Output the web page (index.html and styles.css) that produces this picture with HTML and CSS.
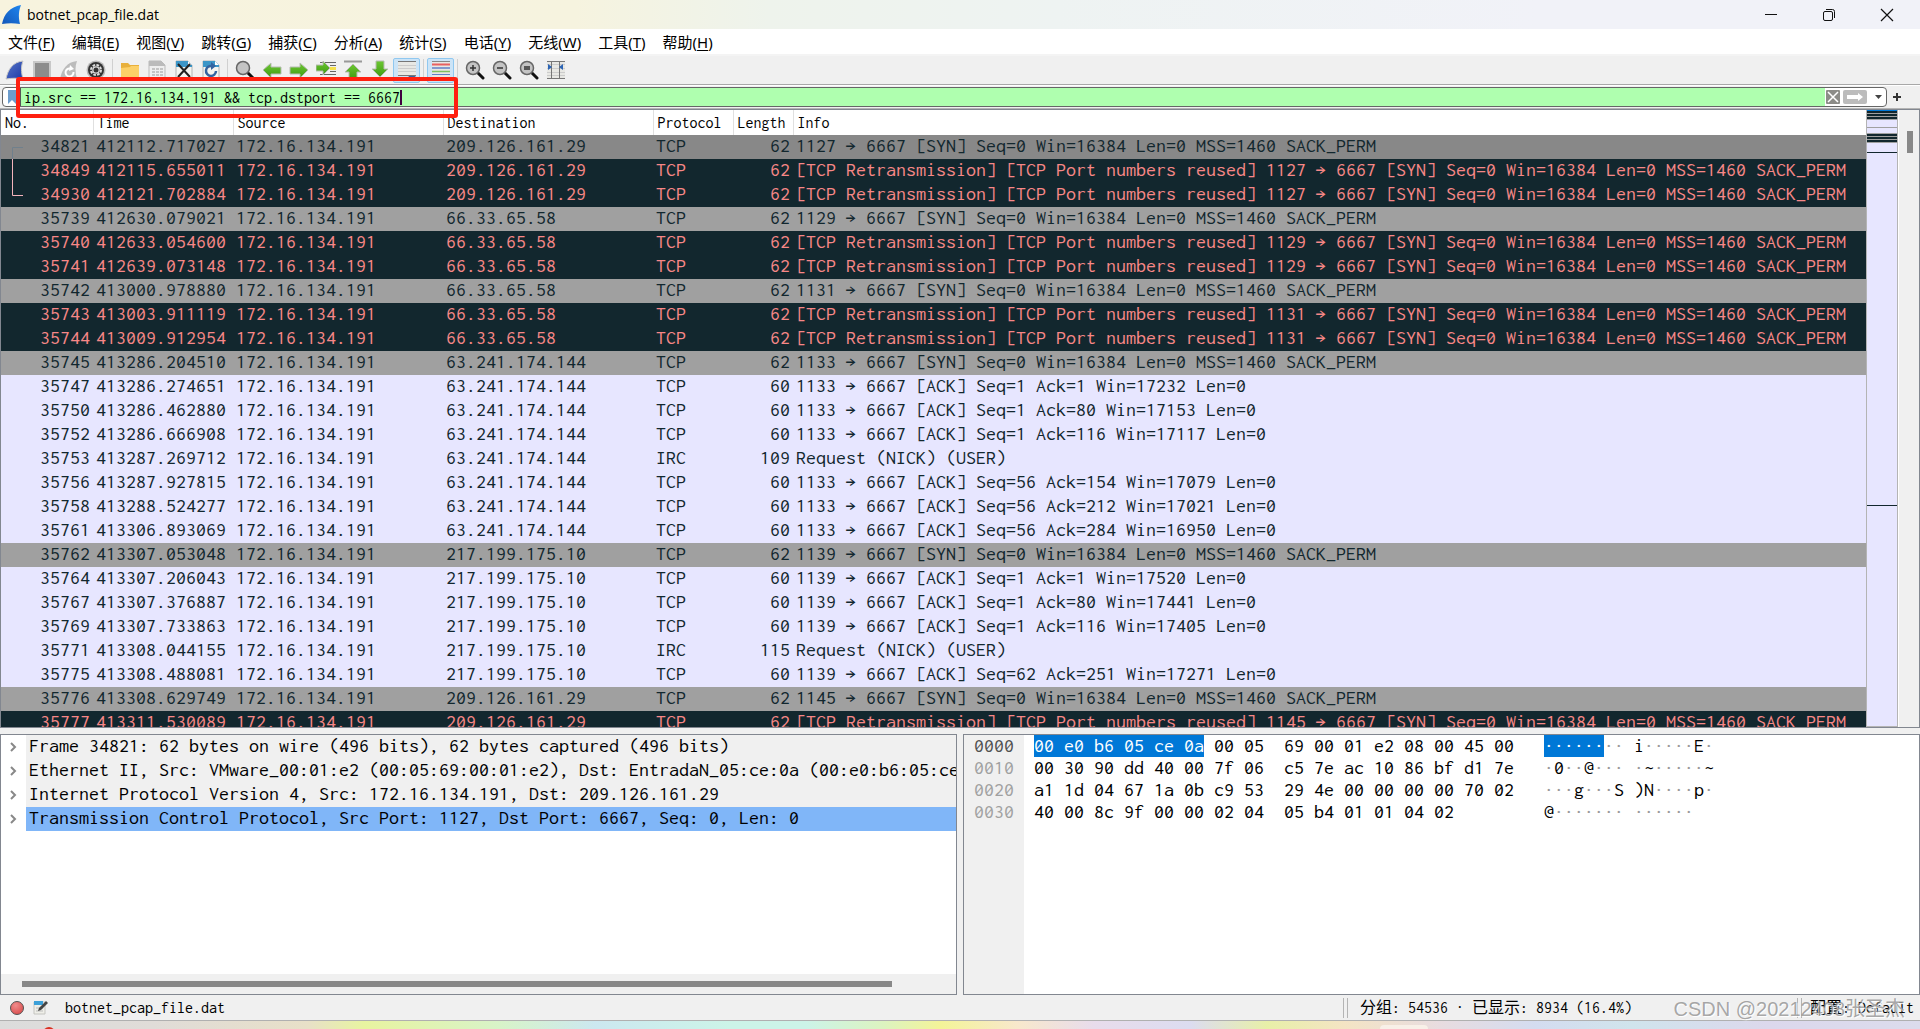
FILE: index.html
```
<!DOCTYPE html>
<html lang="zh-CN">
<head>
<meta charset="utf-8">
<title>botnet_pcap_file.dat</title>
<link rel="stylesheet" href="styles.css">
</head>
<body>
<svg width="0" height="0" class="defs" aria-hidden="true">
  <defs>
    <linearGradient id="fin" x1="0" y1="1" x2="1" y2="0"><stop offset="0" stop-color="#1457b8"/><stop offset="1" stop-color="#1e86f0"/></linearGradient>
    <linearGradient id="finDark" x1="0" y1="0" x2="1" y2="1"><stop offset="0" stop-color="#5a78c8"/><stop offset="1" stop-color="#1c3aa8"/></linearGradient>
    <linearGradient id="green" x1="0" y1="0" x2="0" y2="1"><stop offset="0" stop-color="#6cc832"/><stop offset="1" stop-color="#3f9a12"/></linearGradient>
    <radialGradient id="red" cx=".4" cy=".3" r=".8"><stop offset="0" stop-color="#f08c8c"/><stop offset="1" stop-color="#d84848"/></radialGradient>
    <symbol id="page" viewBox="0 0 20 20"><path d="M2 1h12l4 4v14H2z" fill="#f4f4f0" stroke="#b4b4b4"/><path d="M2 1h12l4 4v2H2z" fill="#3c96c8"/><path d="M14 1v4h4z" fill="#fff"/></symbol>
    <symbol id="lens" viewBox="0 0 20 20"><path d="M12 12l6 6" stroke="#111" stroke-width="3" stroke-linecap="round"/><circle cx="8" cy="8" r="6.500" fill="#c4c4c4" stroke="#666" stroke-width="1.500"/></symbol>
  </defs>
</svg>
<div class="window">
  <header class="titlebar">
    <svg class="logo" width="20" height="20" viewBox="0 0 20 20"><path d="M0 19C2 9 8 2 19 0c-2 5-3 11-1 19-6-1-12-1-18 0z" fill="url(#fin)"/></svg>
    <h1 class="title">botnet_pcap_file.dat</h1>
    <div class="controls">
      <button class="control" aria-label="最小化"><svg width="14" height="14"><path d="M1 6.500h12" stroke="#111"/></svg></button>
      <button class="control" aria-label="还原"><svg width="14" height="14" fill="none" stroke="#111"><rect x="1.500" y="3.500" width="9" height="9" rx="1.500"/><path d="M4 1.500h6.500a2 2 0 0 1 2 2V10"/></svg></button>
      <button class="control" aria-label="关闭"><svg width="14" height="14"><path d="M1 1l12 12M13 1L1 13" stroke="#111" stroke-width="1.200"/></svg></button>
    </div>
  </header>

  <nav class="menubar">
    <button>文件(<u>F</u>)</button>
    <button>编辑(<u>E</u>)</button>
    <button>视图(<u>V</u>)</button>
    <button>跳转(<u>G</u>)</button>
    <button>捕获(<u>C</u>)</button>
    <button>分析(<u>A</u>)</button>
    <button>统计(<u>S</u>)</button>
    <button>电话(<u>Y</u>)</button>
    <button>无线(<u>W</u>)</button>
    <button>工具(<u>T</u>)</button>
    <button>帮助(<u>H</u>)</button>
  </nav>

  <div class="toolbar">
    <button aria-label="开始捕获"><svg viewBox="0 0 20 20"><path d="M1 19C3 9 8 2 18 1c-2 5-2 11 0 18-6-1-11-1-17 0z" fill="url(#finDark)" stroke="#c8c8c8"/></svg></button>
    <button aria-label="停止捕获"><svg viewBox="0 0 20 20"><path d="M1 1h18v18H1z" fill="#c8c8c8"/><path d="M3 3h14v14H3z" fill="#8c8c8c"/></svg></button>
    <button aria-label="重新开始"><svg viewBox="0 0 20 20"><path d="M1 19C3 9 8 2 18 1c-2 5-2 11 0 18-6-1-11-1-17 0z" fill="#bcbcbc"/><path d="M14.500 12a4 4 0 1 1-2-3" fill="none" stroke="#fff" stroke-width="2"/><path d="M11 5l4 4-5 2z" fill="#fff"/></svg></button>
    <button aria-label="捕获选项"><svg viewBox="0 0 20 20"><circle cx="10" cy="10" r="9.500" fill="#bbb"/><circle cx="10" cy="10" r="8" fill="#333"/><circle cx="10" cy="10" r="5" fill="none" stroke="#ddd" stroke-width="2" stroke-dasharray="2.600 1.300"/><circle cx="10" cy="10" r="3.800" fill="#ddd"/><circle cx="10" cy="10" r="2.500" fill="#333"/></svg></button>
    <i class="sep"></i>
    <button aria-label="打开"><svg viewBox="0 0 20 20"><path d="M1 3h7l2 2h9v14H1z" fill="#e8b03c"/><path d="M1 8l9-1 1-1h8v13H1z" fill="#fcd068"/></svg></button>
    <button aria-label="保存"><svg viewBox="0 0 20 20"><path d="M2 1h12l4 4v14H2z" fill="#eee" stroke="#bbb"/><path d="M2 1h12l4 4v1H2z" fill="#bbb"/><path d="M5 9h11M5 12h11M5 15h11" stroke="#c4c4c4" stroke-width="2" stroke-dasharray="3 1"/></svg></button>
    <button aria-label="关闭文件"><svg viewBox="0 0 20 20"><use href="#page"/><path d="M4 4l12 13M16 4L4 17" stroke="#222" stroke-width="2"/></svg></button>
    <button aria-label="重新加载"><svg viewBox="0 0 20 20"><use href="#page"/><path d="M15 11a5 5 0 1 1-4-5" fill="none" stroke="#3464a0" stroke-width="2.500"/><path d="M10 2l5 4-5 4z" fill="#3464a0"/></svg></button>
    <i class="sep"></i>
    <button aria-label="查找"><svg viewBox="0 0 20 20"><use href="#lens"/></svg></button>
    <button aria-label="后退"><svg viewBox="0 0 20 20"><path d="M1 10l8-7v4h10v7H9v4z" fill="url(#green)" stroke="#b8bcb4"/></svg></button>
    <button aria-label="前进"><svg viewBox="0 0 20 20"><path d="M19 10l-8-7v4H1v7h10v4z" fill="url(#green)" stroke="#b8bcb4"/></svg></button>
    <button aria-label="转到分组"><svg viewBox="0 0 20 20"><path d="M4 2.500h16M14 5.500h6M14 11.500h6M4 14.500h16M4 17.500h16" stroke="#666"/><path d="M14 7h6v3h-6z" fill="#f4e04c"/><path d="M14 8L7 1v4H0v6h7v4z" fill="url(#green)" stroke="#b8bcb4"/></svg></button>
    <button aria-label="首个分组"><svg viewBox="0 0 20 20"><path d="M1 1.500h18" stroke="#999" stroke-width="2"/><path d="M10 4l8 8h-4v7H6v-7H2z" fill="url(#green)" stroke="#b8bcb4"/></svg></button>
    <button aria-label="最新分组"><svg viewBox="0 0 20 20"><path d="M10 17l8-8h-4V1H6v8H2z" fill="url(#green)" stroke="#b8bcb4"/></svg></button>
    <button class="on" aria-label="自动滚动"><svg viewBox="0 0 20 20"><path d="M1 1h18v14H1z" fill="#e8e8e4"/><path d="M1 1.500h18M1 15.500h18" stroke="#777"/><path d="M1 5.500h18M1 8.500h18M1 11.500h18" stroke="#ccc"/><path d="M11 16h8l-4 3z" fill="#3464a0"/></svg></button>
    <i class="sep"></i>
    <button class="on" aria-label="着色"><svg viewBox="0 0 20 20" fill="none"><path d="M1 1h18v16H1z" fill="#e8e8e4"/><path d="M1 1.500h18" stroke="#888"/><path d="M1 4.500h18" stroke="#e86060" stroke-width="2"/><path d="M1 8h18" stroke="#6080c8" stroke-width="1.500"/><path d="M1 11.500h18" stroke="#80c060" stroke-width="1.500"/><path d="M1 14.500h18" stroke="#6080c8"/><path d="M1 17.500h18" stroke="#888"/></svg></button>
    <i class="sep"></i>
    <button aria-label="放大"><svg viewBox="0 0 20 20"><use href="#lens"/><path d="M5 8h6M8 5v6" stroke="#333" stroke-width="1.500"/></svg></button>
    <button aria-label="缩小"><svg viewBox="0 0 20 20"><use href="#lens"/><path d="M5 8h6" stroke="#333" stroke-width="1.500"/></svg></button>
    <button aria-label="正常大小"><svg viewBox="0 0 20 20"><use href="#lens"/><path d="M5 7h6M5 9h6" stroke="#333" stroke-width="1.500"/></svg></button>
    <button aria-label="调整列宽"><svg viewBox="0 0 20 20"><path d="M1 1h18v18H1z" fill="#e8e8e4"/><path d="M1 4.500h18M1 8.500h18M1 12.500h18M1 15.500h18" stroke="#ccc"/><path d="M1 1.500h18M1 18.500h18M5.500 1v18M13.500 1v18" stroke="#777"/><path d="M2 4l4 3-4 3zM17 4l-4 3 4 3z" fill="#2c64b4"/></svg></button>
  </div>

  <form class="filterbar">
    <div class="filter">
      <button type="button" class="bookmark" aria-label="书签"><svg width="10" height="14"><path d="M1 0h8v14l-4-4-4 4z" fill="#6c9ccc"/></svg></button>
      <div class="field">
        <input type="text" aria-label="显示过滤器" value="ip.src == 172.16.134.191 &amp;&amp; tcp.dstport == 6667">
        <i class="caret"></i>
      </div>
      <button type="button" class="clear" aria-label="清除"><svg width="14" height="14"><rect width="14" height="14" rx="1" fill="#8c8c88"/><path d="M2 2l10 10M12 2L2 12" stroke="#fff" stroke-width="1.500"/></svg></button>
      <button type="button" class="apply" aria-label="应用"><svg width="24" height="14"><rect width="24" height="14" rx="2" fill="#bcbcbc"/><path d="M4 5h11V3l5 4-5 4V9H4z" fill="#fff"/></svg></button>
      <button type="button" class="drop" aria-label="历史"><svg width="7" height="4"><path d="M0 0h7L3.500 4z" fill="#444"/></svg></button>
    </div>
    <button type="button" class="add" aria-label="添加"><svg width="8" height="8"><path d="M4 0v8M0 4h8" stroke="#333" stroke-width="2"/></svg></button>
    <div class="marker"></div>
  </form>

  <main class="panes">
    <section class="packets">
      <div class="list">
        <table>
          <colgroup><col class="w-no"><col class="w-time"><col class="w-addr"><col class="w-addr"><col class="w-proto"><col class="w-len"><col></colgroup>
          <thead><tr><th>No.</th><th>Time</th><th>Source</th><th>Destination</th><th>Protocol</th><th>Length</th><th>Info</th></tr></thead>
          <tbody>
            <tr class="sel"><td>34821</td><td>412112.717027</td><td>172.16.134.191</td><td>209.126.161.29</td><td>TCP</td><td>62</td><td>1127 → 6667 [SYN] Seq=0 Win=16384 Len=0 MSS=1460 SACK_PERM</td></tr>
            <tr class="bad"><td>34849</td><td>412115.655011</td><td>172.16.134.191</td><td>209.126.161.29</td><td>TCP</td><td>62</td><td>[TCP Retransmission] [TCP Port numbers reused] 1127 → 6667 [SYN] Seq=0 Win=16384 Len=0 MSS=1460 SACK_PERM</td></tr>
            <tr class="bad"><td>34930</td><td>412121.702884</td><td>172.16.134.191</td><td>209.126.161.29</td><td>TCP</td><td>62</td><td>[TCP Retransmission] [TCP Port numbers reused] 1127 → 6667 [SYN] Seq=0 Win=16384 Len=0 MSS=1460 SACK_PERM</td></tr>
            <tr class="syn"><td>35739</td><td>412630.079021</td><td>172.16.134.191</td><td>66.33.65.58</td><td>TCP</td><td>62</td><td>1129 → 6667 [SYN] Seq=0 Win=16384 Len=0 MSS=1460 SACK_PERM</td></tr>
            <tr class="bad"><td>35740</td><td>412633.054600</td><td>172.16.134.191</td><td>66.33.65.58</td><td>TCP</td><td>62</td><td>[TCP Retransmission] [TCP Port numbers reused] 1129 → 6667 [SYN] Seq=0 Win=16384 Len=0 MSS=1460 SACK_PERM</td></tr>
            <tr class="bad"><td>35741</td><td>412639.073148</td><td>172.16.134.191</td><td>66.33.65.58</td><td>TCP</td><td>62</td><td>[TCP Retransmission] [TCP Port numbers reused] 1129 → 6667 [SYN] Seq=0 Win=16384 Len=0 MSS=1460 SACK_PERM</td></tr>
            <tr class="syn"><td>35742</td><td>413000.978880</td><td>172.16.134.191</td><td>66.33.65.58</td><td>TCP</td><td>62</td><td>1131 → 6667 [SYN] Seq=0 Win=16384 Len=0 MSS=1460 SACK_PERM</td></tr>
            <tr class="bad"><td>35743</td><td>413003.911119</td><td>172.16.134.191</td><td>66.33.65.58</td><td>TCP</td><td>62</td><td>[TCP Retransmission] [TCP Port numbers reused] 1131 → 6667 [SYN] Seq=0 Win=16384 Len=0 MSS=1460 SACK_PERM</td></tr>
            <tr class="bad"><td>35744</td><td>413009.912954</td><td>172.16.134.191</td><td>66.33.65.58</td><td>TCP</td><td>62</td><td>[TCP Retransmission] [TCP Port numbers reused] 1131 → 6667 [SYN] Seq=0 Win=16384 Len=0 MSS=1460 SACK_PERM</td></tr>
            <tr class="syn"><td>35745</td><td>413286.204510</td><td>172.16.134.191</td><td>63.241.174.144</td><td>TCP</td><td>62</td><td>1133 → 6667 [SYN] Seq=0 Win=16384 Len=0 MSS=1460 SACK_PERM</td></tr>
            <tr><td>35747</td><td>413286.274651</td><td>172.16.134.191</td><td>63.241.174.144</td><td>TCP</td><td>60</td><td>1133 → 6667 [ACK] Seq=1 Ack=1 Win=17232 Len=0</td></tr>
            <tr><td>35750</td><td>413286.462880</td><td>172.16.134.191</td><td>63.241.174.144</td><td>TCP</td><td>60</td><td>1133 → 6667 [ACK] Seq=1 Ack=80 Win=17153 Len=0</td></tr>
            <tr><td>35752</td><td>413286.666908</td><td>172.16.134.191</td><td>63.241.174.144</td><td>TCP</td><td>60</td><td>1133 → 6667 [ACK] Seq=1 Ack=116 Win=17117 Len=0</td></tr>
            <tr><td>35753</td><td>413287.269712</td><td>172.16.134.191</td><td>63.241.174.144</td><td>IRC</td><td>109</td><td>Request (NICK) (USER)</td></tr>
            <tr><td>35756</td><td>413287.927815</td><td>172.16.134.191</td><td>63.241.174.144</td><td>TCP</td><td>60</td><td>1133 → 6667 [ACK] Seq=56 Ack=154 Win=17079 Len=0</td></tr>
            <tr><td>35758</td><td>413288.524277</td><td>172.16.134.191</td><td>63.241.174.144</td><td>TCP</td><td>60</td><td>1133 → 6667 [ACK] Seq=56 Ack=212 Win=17021 Len=0</td></tr>
            <tr><td>35761</td><td>413306.893069</td><td>172.16.134.191</td><td>63.241.174.144</td><td>TCP</td><td>60</td><td>1133 → 6667 [ACK] Seq=56 Ack=284 Win=16950 Len=0</td></tr>
            <tr class="syn"><td>35762</td><td>413307.053048</td><td>172.16.134.191</td><td>217.199.175.10</td><td>TCP</td><td>62</td><td>1139 → 6667 [SYN] Seq=0 Win=16384 Len=0 MSS=1460 SACK_PERM</td></tr>
            <tr><td>35764</td><td>413307.206043</td><td>172.16.134.191</td><td>217.199.175.10</td><td>TCP</td><td>60</td><td>1139 → 6667 [ACK] Seq=1 Ack=1 Win=17520 Len=0</td></tr>
            <tr><td>35767</td><td>413307.376887</td><td>172.16.134.191</td><td>217.199.175.10</td><td>TCP</td><td>60</td><td>1139 → 6667 [ACK] Seq=1 Ack=80 Win=17441 Len=0</td></tr>
            <tr><td>35769</td><td>413307.733863</td><td>172.16.134.191</td><td>217.199.175.10</td><td>TCP</td><td>60</td><td>1139 → 6667 [ACK] Seq=1 Ack=116 Win=17405 Len=0</td></tr>
            <tr><td>35771</td><td>413308.044155</td><td>172.16.134.191</td><td>217.199.175.10</td><td>IRC</td><td>115</td><td>Request (NICK) (USER)</td></tr>
            <tr><td>35775</td><td>413308.488081</td><td>172.16.134.191</td><td>217.199.175.10</td><td>TCP</td><td>60</td><td>1139 → 6667 [ACK] Seq=62 Ack=251 Win=17271 Len=0</td></tr>
            <tr class="syn"><td>35776</td><td>413308.629749</td><td>172.16.134.191</td><td>209.126.161.29</td><td>TCP</td><td>62</td><td>1145 → 6667 [SYN] Seq=0 Win=16384 Len=0 MSS=1460 SACK_PERM</td></tr>
            <tr class="bad"><td>35777</td><td>413311.530089</td><td>172.16.134.191</td><td>209.126.161.29</td><td>TCP</td><td>62</td><td>[TCP Retransmission] [TCP Port numbers reused] 1145 → 6667 [SYN] Seq=0 Win=16384 Len=0 MSS=1460 SACK_PERM</td></tr>
          </tbody>
        </table>
        <svg class="bracket" width="12" height="50" fill="none"><path d="M11 .500H.500V12" stroke="#70808c"/><path d="M.500 12v36.500H11" stroke="#f4b4bc"/></svg>
      </div>
      <div class="minimap">
        <svg width="30" height="400" shape-rendering="crispEdges">
          <path d="M0 0h30v9H0zM0 23h30v9H0z" fill="#12272e"/>
          <path d="M0 0h30v1H0z" fill="#0078d7"/>
          <path d="M0 3h30v1H0zM0 6h30v1H0zM0 9h30v1H0zM0 17h30v1H0zM0 23h30v1H0zM0 26h30v1H0zM0 29h30v1H0zM0 32h30v1H0z" fill="#a0a0a0"/>
          <path d="M0 42h30v1H0zM0 395h30v1H0z" fill="#12272e"/>
        </svg>
      </div>
      <div class="vscroll"><i></i></div>
    </section>

    <div class="lower">
      <section class="details">
        <ul>
          <li><button aria-label="展开"><svg width="7" height="10"><path d="M1 1l4 4-4 4" fill="none" stroke="#888" stroke-width="2"/></svg></button><span>Frame 34821: 62 bytes on wire (496 bits), 62 bytes captured (496 bits)</span></li>
          <li><button aria-label="展开"><svg width="7" height="10"><path d="M1 1l4 4-4 4" fill="none" stroke="#888" stroke-width="2"/></svg></button><span>Ethernet II, Src: VMware_00:01:e2 (00:05:69:00:01:e2), Dst: EntradaN_05:ce:0a (00:e0:b6:05:ce:0a)</span></li>
          <li><button aria-label="展开"><svg width="7" height="10"><path d="M1 1l4 4-4 4" fill="none" stroke="#888" stroke-width="2"/></svg></button><span>Internet Protocol Version 4, Src: 172.16.134.191, Dst: 209.126.161.29</span></li>
          <li class="current"><button aria-label="展开"><svg width="7" height="10"><path d="M1 1l4 4-4 4" fill="none" stroke="#888" stroke-width="2"/></svg></button><span>Transmission Control Protocol, Src Port: 1127, Dst Port: 6667, Seq: 0, Len: 0</span></li>
        </ul>
        <div class="hscroll"><i></i></div>
      </section>
      <section class="bytes">
        <pre class="offsets"><b>0000</b>
0010
0020
0030</pre>
        <pre class="hex"><mark>00 e0 b6 05 ce 0a</mark> 00 05  69 00 01 e2 08 00 45 00
00 30 90 dd 40 00 7f 06  c5 7e ac 10 86 bf d1 7e
a1 1d 04 67 1a 0b c9 53  29 4e 00 00 00 00 70 02
40 00 8c 9f 00 00 02 04  05 b4 01 01 04 02</pre>
        <pre class="ascii"><mark>······</mark><s>··</s> i<s>·····</s>E<s>·</s>
<s>·</s>0<s>··</s>@<s>···</s> <s>·</s>~<s>·····</s>~
<s>···</s>g<s>···</s>S )N<s>····</s>p<s>·</s>
@<s>·······</s> <s>······</s></pre>
      </section>
    </div>
  </main>

  <footer class="statusbar">
    <button aria-label="专家信息"><svg width="16" height="16"><circle cx="8" cy="8" r="6.500" fill="url(#red)" stroke="#555"/></svg></button>
    <button aria-label="注释"><svg width="16" height="16"><path d="M1 2h11v12H1z" fill="#eeeee8" stroke="#c4c4c0"/><path d="M1 1h9v4H1z" fill="#3ca0d8"/><path d="M3 8h7M3 11h7" stroke="#bbb"/><path d="M5 11l1-3 7-7 2 2-7 7z" fill="#444"/></svg></button>
    <span class="file">botnet_pcap_file.dat</span>
    <i class="grip"></i>
    <span class="counts">分组: 54536 · 已显示: 8934 (16.4%)</span>
    <i class="grip"></i>
    <span class="profile">配置: Default</span>
    <span class="watermark">CSDN @20212408张圣杰</span>
  </footer>
  <div class="desktop"><i class="badge"></i><i class="tab"></i></div>
</div>
</body>
</html>
```
FILE: styles.css
```
* { box-sizing: border-box; }

body {
  margin: 0;
  background: #f0f0f0;
  color: #000;
  font: 16px/24px "Inconsolata", "Liberation Mono", "Noto Sans CJK SC", monospace;
}

button {
  display: flex;
  align-items: center;
  justify-content: center;
  margin: 0;
  padding: 0;
  border: 0;
  background: none;
  color: inherit;
  font: inherit;
}

svg { display: block; flex: none; }
.defs { position: absolute; }

.window {
  display: flex;
  flex-direction: column;
  height: 100vh;
  overflow: hidden;
}

/* Title bar */
.titlebar {
  display: flex;
  align-items: center;
  flex: none;
  height: 29px;
  padding-left: 2px;
  gap: 5px;
  background: linear-gradient(90deg, #f7f3de 0%, #f6f3df 30%, #eef3ec 40%, #eef3f2 55%, #f1f2f8 80%);
}
.title {
  flex: 1;
  margin: 0;
  font: 14px/20px "Open Sans", sans-serif;
}
.controls { display: flex; padding-right: 4px; }
.control { width: 58px; height: 28px; }

/* Menu */
.menubar {
  display: flex;
  flex: none;
  gap: 17px;
  height: 27px;
  padding: 1px 8px 0;
  border-bottom: 2px solid #f4f4f4;
  background: #fff;
  font: 15px/24px "Noto Sans", "Noto Sans CJK SC", sans-serif;
}
.menubar button { height: 24px; }
.menubar u { text-underline-offset: 2px; }

/* Main toolbar */
.toolbar {
  display: flex;
  align-items: center;
  flex: none;
  height: 29px;
  padding-left: 1px;
  border-bottom: 1px solid #a8a8a8;
}
.toolbar button { width: 27px; height: 25px; }
.toolbar svg { width: 20px; height: 20px; }
.toolbar .on { border: 1px solid #90c8f0; border-radius: 2px; background: #cce4f7; }
.sep { width: 1px; height: 22px; margin: 0 3px; background: #d0d0d0; }

/* Display filter */
.filterbar {
  position: relative;
  z-index: 1;
  display: flex;
  align-items: center;
  flex: none;
  height: 24px;
  padding: 0 19px 0 2px;
  border-top: 1px solid #fff;
  border-bottom: 1px solid #b4b4b4;
}
.filter {
  display: flex;
  align-items: center;
  flex: 1;
  height: 20px;
  border: 1px solid #666;
  border-radius: 4px;
  background: #fff;
}
.bookmark { width: 17px; }
.field { position: relative; flex: 1; height: 100%; margin-right: 1px; }
.field input {
  display: block;
  width: 100%;
  height: 100%;
  padding: 0 3px;
  border: 0;
  border-left: 1px solid #555;
  background: #afffaf;
  color: #000;
  font: inherit;
  line-height: 18px;
  outline: 0;
}
.caret { position: absolute; left: 380px; top: 2px; width: 2px; height: 15px; background: #400040; }
.clear { width: 14px; margin-right: 3px; }
.apply { width: 24px; margin-right: 8px; }
.drop { width: 7px; margin-right: 4px; }
.add { width: 8px; margin-left: 6px; }
.marker {
  position: absolute;
  left: 16px;
  top: -9px;
  width: 442px;
  height: 41px;
  border: 4px solid #ff2010;
  border-radius: 3px;
  pointer-events: none;
}

/* Pane layout */
.panes {
  display: grid;
  grid-template-rows: minmax(0, 619fr) minmax(0, 261fr);
  flex: 1;
  gap: 6px;
  min-height: 0;
}
.lower {
  display: grid;
  grid-template-columns: minmax(0, 957fr) minmax(0, 957fr);
  gap: 6px;
}
.packets, .details, .bytes { border: 1px solid #828790; min-height: 0; overflow: hidden; }

/* Packet list */
.packets { display: flex; }
.list { position: relative; flex: 1; min-width: 0; overflow: hidden; background: #fff; }
table { width: 100%; border-collapse: collapse; table-layout: fixed; }
.w-no { width: 92px; }
.w-time { width: 140px; }
.w-addr { width: 210px; }
.w-proto { width: 80px; }
.w-len { width: 60px; }
th {
  height: 25px;
  padding: 0 0 0 4px;
  border-right: 1px solid #e0e0e0;
  font-weight: 400;
  line-height: 25px;
  text-align: left;
}
th:last-child { border-right: 0; }
td {
  height: 24px;
  padding: 0 3px 2px;
  overflow: hidden;
  font-size: 20px;
  line-height: 22px;
  white-space: pre;
}
td:nth-child(1), td:nth-child(6) { text-align: right; }
tbody tr { background: #e7e6ff; color: #12272e; }
tbody .syn { background: #a0a0a0; }
tbody .sel { background: #888; }
tbody .bad { background: #12272e; color: #f78787; }
.bracket { position: absolute; left: 11px; top: 37px; }
.minimap { width: 32px; border: solid #b4b4b4; border-width: 0 1px 1px; background: #e7e6ff; }
.vscroll { width: 21px; padding: 21px 6px 0 8px; border-left: 1px solid #fff; }
.vscroll i { display: block; width: 6px; height: 22px; background: #888; }

/* Packet details */
.details { display: flex; flex-direction: column; background: #fff; font-size: 20px; }
.details ul { flex: 1; margin: 0; padding: 0; list-style: none; overflow: hidden; }
.details li { display: flex; height: 24px; line-height: 22px; }
.details li button { flex: none; width: 25px; }
.details li span { flex: 1; padding-left: 3px; background: #f0f0f0; white-space: pre; overflow: hidden; }
.details .current span { background: #80b6f8; }
.hscroll { height: 20px; padding: 7px 64px 0 21px; background: #f0f0f0; }
.hscroll i { display: block; height: 6px; background: #888; }

/* Packet bytes */
.bytes { display: flex; background: #fff; font-size: 20px; line-height: 22px; }
.bytes pre { flex: none; margin: 0; font: inherit; }
.offsets { width: 60px; padding-left: 10px; background: #f0f0f0; color: #a0a0a0; }
.offsets b { color: #505050; font-weight: 400; }
.hex { width: 510px; padding-left: 10px; }
.ascii { padding-left: 10px; }
.bytes mark { display: inline-block; height: 22px; background: #0078d7; color: #fff; vertical-align: top; }
.bytes s { color: #999; text-decoration: none; }

/* Status bar */
.statusbar {
  position: relative;
  display: flex;
  align-items: center;
  flex: none;
  height: 26px;
  padding: 0 6px 0 9px;
  border-bottom: 1px solid #b0b0b0;
}
.statusbar button { width: 16px; margin-right: 8px; }
.file { flex: 1; padding-left: 8px; }
.grip { width: 5px; height: 20px; border: solid #b4b4b4; border-width: 0 1px; }
.counts { width: 449px; padding-left: 12px; }
.profile { padding-left: 8px; }
.watermark {
  position: absolute;
  right: 15px;
  top: 2px;
  color: rgba(120, 120, 120, .65);
  font: 20px/24px "Liberation Sans", "Noto Sans CJK SC", sans-serif;
  text-shadow: 1px 1px 1px #fff;
}

/* Sliver of the desktop taskbar under the window */
.desktop {
  position: relative;
  flex: none;
  height: 8px;
  background: linear-gradient(90deg, #dcdcdc 0%, #e0dcd8 8%, #e8e0c8 16%, #e8f4a0 19%, #d8f4c8 26%, #cce8f0 31%, #ccf4e8 38%, #ccf4e8 42%, #dcf4c0 46%, #f4f498 49%, #f8e8cc 53%, #e8dcec 57%, #dcdcf0 62%, #e8f0a8 66%, #f4e4c4 70%, #e8dce0 75%, #d4dcf0 80%, #d0e4ec 85%, #dcd8ec 92%, #dcdcec 100%);
}
.badge { position: absolute; left: 43px; top: 6px; width: 12px; height: 12px; border-radius: 6px; background: #d83020; }
.tab { position: absolute; left: 1380px; top: 4px; width: 48px; height: 4px; border-radius: 4px 4px 0 0; background: #f8f0e8; }
```
